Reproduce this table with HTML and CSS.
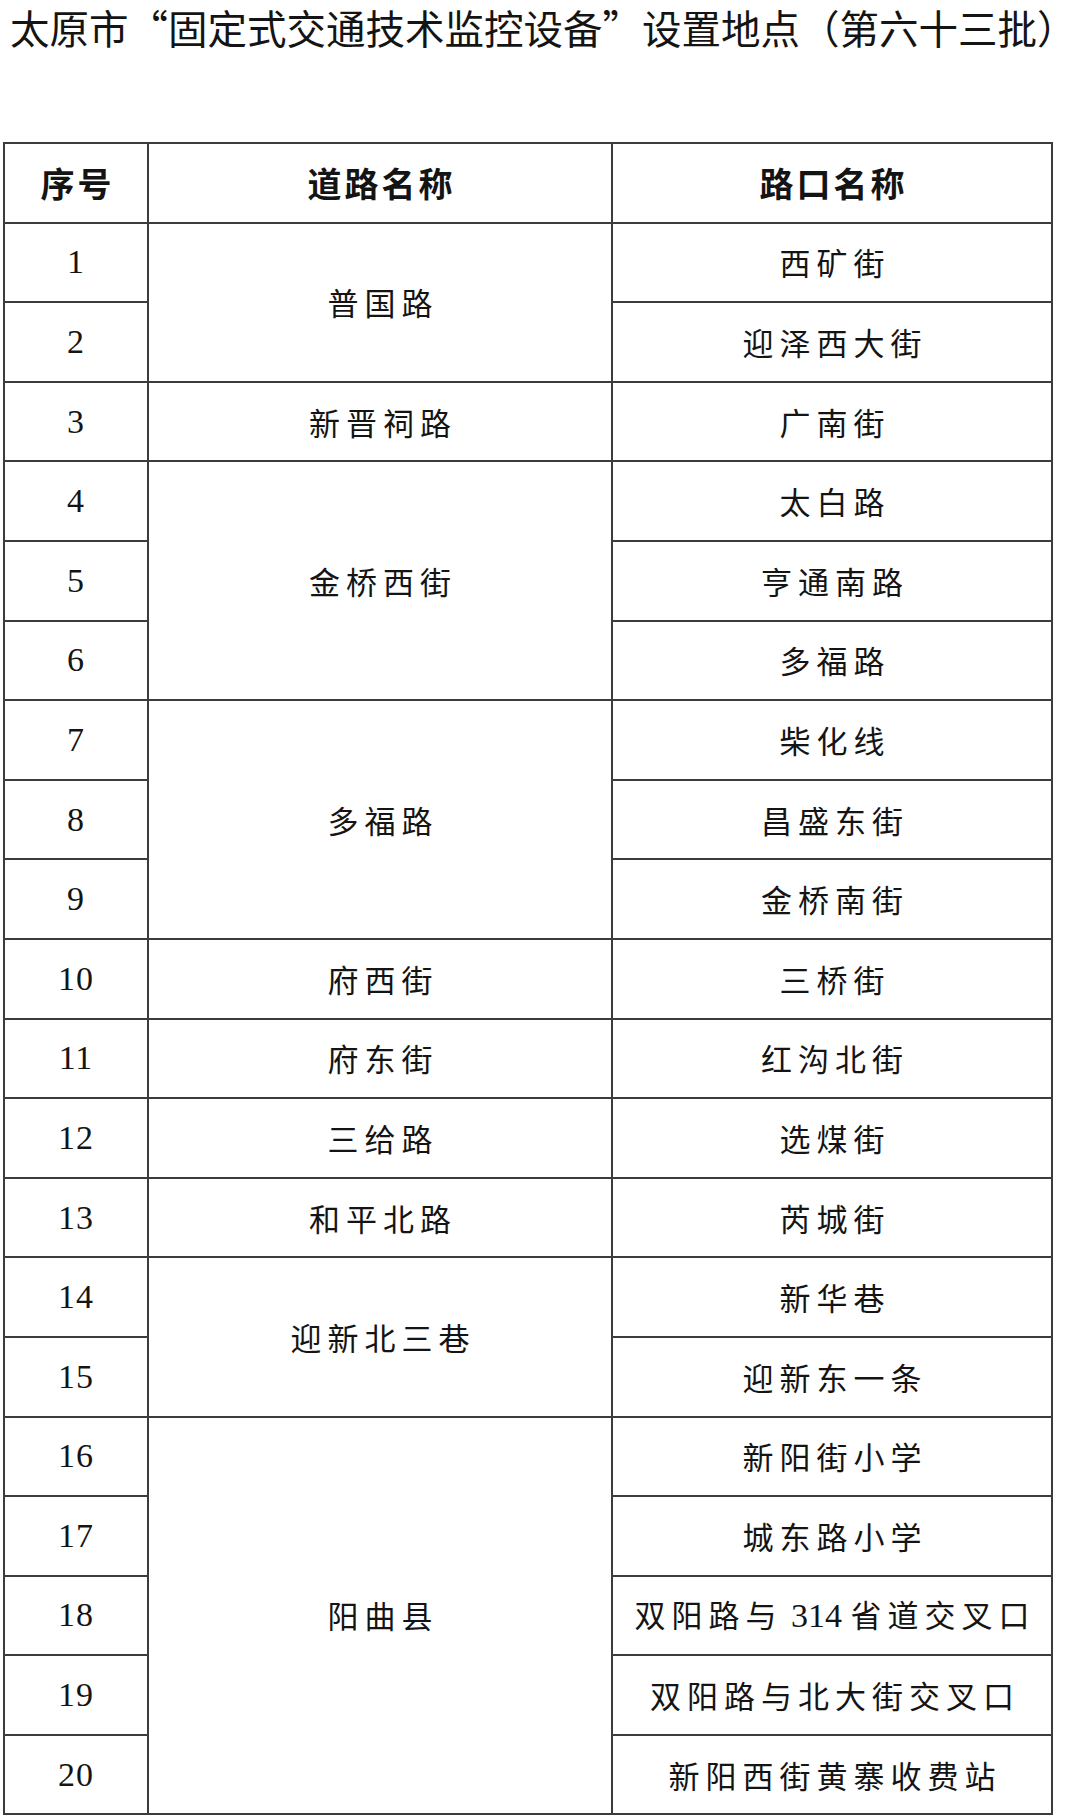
FILE: index.html
```html
<!DOCTYPE html>
<html lang="zh-CN">
<head>
<meta charset="utf-8">
<title>太原市固定式交通技术监控设备设置地点</title>
<link rel="stylesheet" href="styles.css">
</head>
<body>
<div class="page">
  <h1 class="title">太原市“固定式交通技术监控设备”设置地点（第六十三批）</h1>
  <table class="grid">
    <colgroup>
      <col class="c-no">
      <col class="c-road">
      <col class="c-cross">
    </colgroup>
    <thead>
      <tr>
        <th>序号</th>
        <th>道路名称</th>
        <th>路口名称</th>
      </tr>
    </thead>
    <tbody>
      <tr><td class="no">1</td><td class="zh" rowspan="2">普国路</td><td class="zh">西矿街</td></tr>
      <tr><td class="no">2</td><td class="zh">迎泽西大街</td></tr>
      <tr><td class="no">3</td><td class="zh">新晋祠路</td><td class="zh">广南街</td></tr>
      <tr><td class="no">4</td><td class="zh" rowspan="3">金桥西街</td><td class="zh">太白路</td></tr>
      <tr><td class="no">5</td><td class="zh">亨通南路</td></tr>
      <tr><td class="no">6</td><td class="zh">多福路</td></tr>
      <tr><td class="no">7</td><td class="zh" rowspan="3">多福路</td><td class="zh">柴化线</td></tr>
      <tr><td class="no">8</td><td class="zh">昌盛东街</td></tr>
      <tr><td class="no">9</td><td class="zh">金桥南街</td></tr>
      <tr><td class="no">10</td><td class="zh">府西街</td><td class="zh">三桥街</td></tr>
      <tr><td class="no">11</td><td class="zh">府东街</td><td class="zh">红沟北街</td></tr>
      <tr><td class="no">12</td><td class="zh">三给路</td><td class="zh">选煤街</td></tr>
      <tr><td class="no">13</td><td class="zh">和平北路</td><td class="zh">芮城街</td></tr>
      <tr><td class="no">14</td><td class="zh" rowspan="2">迎新北三巷</td><td class="zh">新华巷</td></tr>
      <tr><td class="no">15</td><td class="zh">迎新东一条</td></tr>
      <tr><td class="no">16</td><td class="zh" rowspan="5">阳曲县</td><td class="zh">新阳街小学</td></tr>
      <tr><td class="no">17</td><td class="zh">城东路小学</td></tr>
      <tr><td class="no">18</td><td class="zh">双阳路与<span class="num"> 314 </span>省道交叉口</td></tr>
      <tr><td class="no">19</td><td class="zh">双阳路与北大街交叉口</td></tr>
      <tr><td class="no">20</td><td class="zh">新阳西街黄寨收费站</td></tr>
    </tbody>
  </table>
</div>
</body>
</html>
```

FILE: styles.css
```css
html, body {
  margin: 0;
  padding: 0;
  background: #ffffff;
}

.page {
  padding: 0 0 0 3px;
  color: #141414;
  font-family: "Noto Sans CJK SC", "Noto Sans", sans-serif;
}

.title {
  margin: 0;
  padding: 7px 0 0 7px;
  font-size: 39.5px;
  line-height: 40px;
  font-weight: 400;
  white-space: nowrap;
  letter-spacing: 0;
  height: 40px;
}

.grid {
  margin-top: 95px;
  border-collapse: collapse;
  table-layout: fixed;
  width: 1048px;
}

.c-no { width: 144px; }
.c-road { width: 464px; }
.c-cross { width: 440px; }

.grid th,
.grid td {
  border: 2px solid #3c3c3c;
  height: 77.6px;
  padding: 0;
  text-align: center;
  vertical-align: middle;
}

.grid th {
  font-size: 34px;
  font-weight: 700;
  letter-spacing: 3px;
  text-indent: 3px;
  line-height: 40px;
}

.grid td.no {
  font-family: "Liberation Serif", "Times New Roman", serif;
  font-size: 34px;
  line-height: 40px;
  letter-spacing: 1px;
}

.grid td.zh {
  font-size: 31px;
  line-height: 40px;
  letter-spacing: 6px;
  text-indent: 6px;
  white-space: nowrap;
}

.num {
  font-family: "Liberation Serif", "Times New Roman", serif;
  font-size: 34px;
  letter-spacing: 0;
}
```
